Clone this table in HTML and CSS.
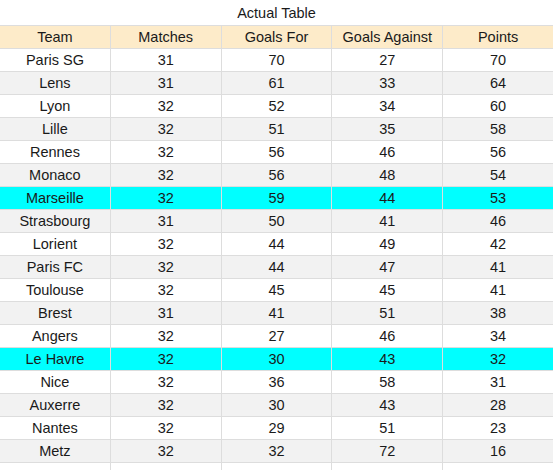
FILE: index.html
```html
<!DOCTYPE html>
<html>
<head>
<meta charset="utf-8">
<link rel="stylesheet" href="styles.css">
</head>
<body>
<div class="title">Actual Table</div>
<table class="standings">
  <thead>
    <tr><th>Team</th><th>Matches</th><th>Goals For</th><th>Goals Against</th><th>Points</th></tr>
  </thead>
  <tbody>
    <tr><td>Paris SG</td><td>31</td><td>70</td><td>27</td><td>70</td></tr>
    <tr><td>Lens</td><td>31</td><td>61</td><td>33</td><td>64</td></tr>
    <tr><td>Lyon</td><td>32</td><td>52</td><td>34</td><td>60</td></tr>
    <tr><td>Lille</td><td>32</td><td>51</td><td>35</td><td>58</td></tr>
    <tr><td>Rennes</td><td>32</td><td>56</td><td>46</td><td>56</td></tr>
    <tr><td>Monaco</td><td>32</td><td>56</td><td>48</td><td>54</td></tr>
    <tr class="hl"><td>Marseille</td><td>32</td><td>59</td><td>44</td><td>53</td></tr>
    <tr><td>Strasbourg</td><td>31</td><td>50</td><td>41</td><td>46</td></tr>
    <tr><td>Lorient</td><td>32</td><td>44</td><td>49</td><td>42</td></tr>
    <tr><td>Paris FC</td><td>32</td><td>44</td><td>47</td><td>41</td></tr>
    <tr><td>Toulouse</td><td>32</td><td>45</td><td>45</td><td>41</td></tr>
    <tr><td>Brest</td><td>31</td><td>41</td><td>51</td><td>38</td></tr>
    <tr><td>Angers</td><td>32</td><td>27</td><td>46</td><td>34</td></tr>
    <tr class="hl"><td>Le Havre</td><td>32</td><td>30</td><td>43</td><td>32</td></tr>
    <tr><td>Nice</td><td>32</td><td>36</td><td>58</td><td>31</td></tr>
    <tr><td>Auxerre</td><td>32</td><td>30</td><td>43</td><td>28</td></tr>
    <tr><td>Nantes</td><td>32</td><td>29</td><td>51</td><td>23</td></tr>
    <tr><td>Metz</td><td>32</td><td>32</td><td>72</td><td>16</td></tr>
    <tr><td></td><td></td><td></td><td></td><td></td></tr>
  </tbody>
</table>
</body>
</html>
```
FILE: styles.css
```css
html, body {
  margin: 0;
  padding: 0;
  background: #ffffff;
}
body {
  font-family: "Liberation Sans", Arial, sans-serif;
  font-size: 14.5px;
  color: #1a1a1a;
}
.title {
  height: 25px;
  line-height: 27px;
  text-align: center;
}
.standings {
  width: 555px;
  table-layout: fixed;
  border-collapse: collapse;
  margin-left: -1px;
}
.standings th,
.standings td {
  border: 1px solid #dddddd;
  height: 23px;
  padding: 0 4px;
  text-align: center;
  font-weight: normal;
  line-height: 16px;
  box-sizing: border-box;
  white-space: nowrap;
  overflow: hidden;
}
.standings th {
  background: #fdebc9;
}
.standings tbody tr:nth-child(even) td {
  background: #f2f2f2;
}
.standings tbody tr.hl td {
  background: #00ffff;
}
```
